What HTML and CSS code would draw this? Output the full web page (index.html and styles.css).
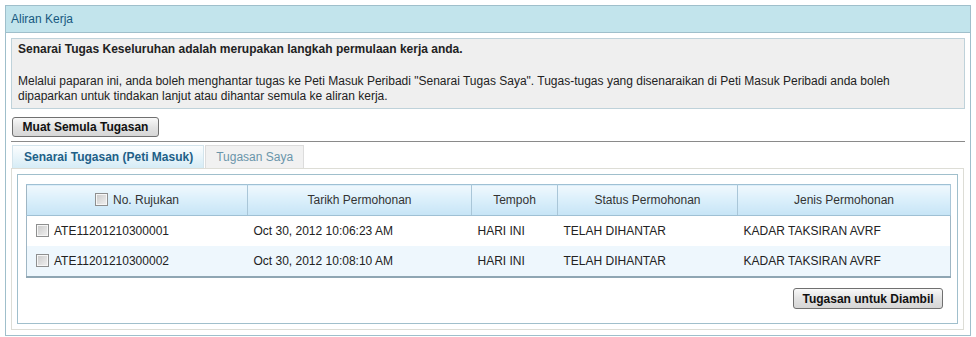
FILE: index.html
```html
<!DOCTYPE html>
<html lang="ms">
<head>
    <meta charset="UTF-8">
    <title>Aliran Kerja</title>
    <link rel="stylesheet" href="styles.css">
</head>
<body>

<div class="panel">
    <div class="panel-head">Aliran Kerja</div>
    <div class="panel-body">
        <div class="info-box">
            <p class="info-title">Senarai Tugas Keseluruhan adalah merupakan langkah permulaan kerja anda.</p>
            <p>Melalui paparan ini, anda boleh menghantar tugas ke Peti Masuk Peribadi "Senarai Tugas Saya". Tugas-tugas yang disenaraikan di Peti Masuk Peribadi anda boleh<br>dipaparkan untuk tindakan lanjut atau dihantar semula ke aliran kerja.</p>
        </div>

        <button class="btn btn-reload">Muat Semula Tugasan</button>
        <div class="rule"></div>

        <div class="tabs">
            <div class="tab active">Senarai Tugasan (Peti Masuk)</div>
            <div class="tab">Tugasan Saya</div>
        </div>

        <div class="tab-panel">
            <div class="grid-box">
                <table class="grid">
                    <thead>
                        <tr>
                            <th class="col-ref"><span class="cb"></span>No. Rujukan</th>
                            <th class="col-date">Tarikh Permohonan</th>
                            <th class="col-time">Tempoh</th>
                            <th class="col-status">Status Permohonan</th>
                            <th class="col-type">Jenis Permohonan</th>
                        </tr>
                    </thead>
                    <tbody>
                        <tr>
                            <td class="ref"><span class="cb"></span>ATE11201210300001</td>
                            <td>Oct 30, 2012 10:06:23 AM</td>
                            <td>HARI INI</td>
                            <td>TELAH DIHANTAR</td>
                            <td>KADAR TAKSIRAN AVRF</td>
                        </tr>
                        <tr class="alt">
                            <td class="ref"><span class="cb"></span>ATE11201210300002</td>
                            <td>Oct 30, 2012 10:08:10 AM</td>
                            <td>HARI INI</td>
                            <td>TELAH DIHANTAR</td>
                            <td>KADAR TAKSIRAN AVRF</td>
                        </tr>
                    </tbody>
                </table>
                <div class="grid-actions">
                    <button class="btn btn-take">Tugasan untuk Diambil</button>
                </div>
            </div>
        </div>
    </div>
</div>

</body>
</html>
```

FILE: styles.css
```css
body {
    margin: 0;
    padding: 5px;
    font-family: "Liberation Sans", Arial, sans-serif;
    font-size: 12px;
    color: #222;
    background-color: #fff;
}

.panel {
    width: 964px;
    border: 1px solid #9fbfcb;
}

.panel-head {
    height: 26px;
    line-height: 26px;
    padding-left: 5px;
    background-color: #c2e4ec;
    border-bottom: 1px solid #9fbfcb;
    color: #17587f;
}

.panel-body {
    padding: 5px;
}

.info-box {
    background-color: #efefef;
    border: 1px solid #bfd2da;
    padding: 3px 6px 4px 6px;
}

.info-box p {
    margin: 0;
    line-height: 15px;
}

.info-box .info-title {
    font-weight: bold;
    margin-bottom: 17px;
}

.btn {
    height: 20px;
    padding: 0 11px;
    white-space: nowrap;
    font-family: "Liberation Sans", Arial, sans-serif;
    font-size: 12px;
    font-weight: bold;
    color: #111;
    background: linear-gradient(#f9f9f9, #e3e3e3 50%, #d6d6d6);
    border: 1px solid #707070;
    border-radius: 3px;
    cursor: pointer;
}

.btn-reload {
    display: block;
    margin: 8px 0 0 1px;
    width: 147px;
    padding: 0 6px;
}

.btn-take {
    width: 150px;
    height: 21px;
    padding: 0 6px;
}

.rule {
    height: 1px;
    background-color: #8a8a8a;
    margin-top: 4px;
}

.tabs {
    display: flex;
    margin: 3px 0 0 1px;
    gap: 1px;
}

.tab {
    height: 22px;
    line-height: 22px;
    padding: 0 10px;
    border: 1px solid #dcdcdc;
    border-bottom: none;
    background-color: #f1f1f1;
    color: #6a95aa;
}

.tab.active {
    padding: 0 10px 0 11px;
    font-weight: bold;
    color: #215f87;
    border-color: #d3e4ec;
    background: linear-gradient(#fbfdfe, #d6ecf6);
}

.tab-panel {
    width: 941px;
    border: 1px solid #ddddd6;
    padding: 5px;
}

.grid-box {
    border: 1px solid #a0bfcc;
    padding: 9px 7px 14px 8px;
}

.grid {
    width: 925px;
    border-collapse: collapse;
    border-left: 1px solid #9fb6c4;
    border-right: 1px solid #9fb6c4;
    border-bottom: 2px solid #8fa6b3;
}

.grid th {
    height: 30px;
    padding: 0 6px;
    font-weight: normal;
    color: #333;
    text-align: center;
    background: linear-gradient(#f0f8fd, #dcf0fb 45%, #c6e4f6);
    border-top: 1px solid #9fc0d4;
    border-bottom: 1px solid #9fc0d4;
    border-right: 1px solid #a9c6d8;
}

.grid td {
    height: 30px;
    padding: 0 6px;
    color: #222;
    white-space: nowrap;
}

.grid tr.alt td {
    background-color: #eef7fd;
}

.col-ref { width: 208px; }
.col-date { width: 211px; }
.col-time { width: 73px; }
.col-status { width: 167px; }

.grid td.ref {
    padding-left: 9px;
}

.cb {
    display: inline-block;
    width: 11px;
    height: 11px;
    margin-right: 5px;
    vertical-align: -2px;
    border: 1px solid #8e8f8f;
    background: linear-gradient(135deg, #c9c9c9, #f1f1f1);
    box-shadow: inset 0 0 0 1px #f6f6f6;
}

.grid-actions {
    display: flex;
    justify-content: flex-end;
    padding-right: 7px;
    margin-top: 10px;
}
```
